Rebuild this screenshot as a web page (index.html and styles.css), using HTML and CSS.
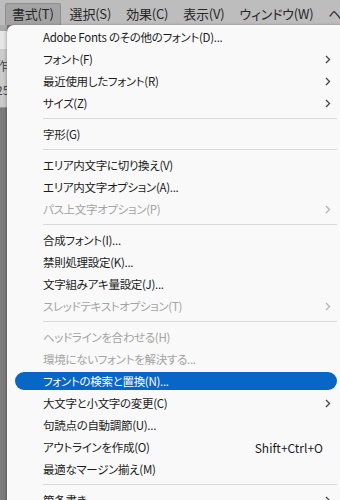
FILE: index.html
```html
<!DOCTYPE html>
<html lang="ja">
<head>
  <meta charset="UTF-8" />
  <title>書式メニュー</title>
  <link rel="stylesheet" href="styles.css">
</head>
<body>
  <div class="menubar">
    <span class="top-item active">書式(T)</span>
    <span class="top-item">選択(S)</span>
    <span class="top-item">効果(C)</span>
    <span class="top-item">表示(V)</span>
    <span class="top-item">ウィンドウ(W)</span>
    <span class="top-item">ヘ</span>
  </div>

  <div class="workspace">
    <div class="side">
      <div class="side-tab"></div>
      <div class="side-panel">
        <span class="side-text t1">作</span>
        <span class="side-text t2">25</span>
      </div>
    </div>

    <div class="menu">
      <div class="row"><span class="label">Adobe Fonts のその他のフォント(D)...</span></div>
      <div class="row sub"><span class="label">フォント(F)</span></div>
      <div class="row sub"><span class="label">最近使用したフォント(R)</span></div>
      <div class="row sub"><span class="label">サイズ(Z)</span></div>
      <div class="sep"></div>
      <div class="row"><span class="label">字形(G)</span></div>
      <div class="sep"></div>
      <div class="row"><span class="label">エリア内文字に切り換え(V)</span></div>
      <div class="row"><span class="label">エリア内文字オプション(A)...</span></div>
      <div class="row sub off"><span class="label">パス上文字オプション(P)</span></div>
      <div class="sep"></div>
      <div class="row"><span class="label">合成フォント(I)...</span></div>
      <div class="row"><span class="label">禁則処理設定(K)...</span></div>
      <div class="row"><span class="label">文字組みアキ量設定(J)...</span></div>
      <div class="row sub off"><span class="label">スレッドテキストオプション(T)</span></div>
      <div class="sep"></div>
      <div class="row off"><span class="label">ヘッドラインを合わせる(H)</span></div>
      <div class="row off"><span class="label">環境にないフォントを解決する...</span></div>
      <div class="row hover"><span class="label">フォントの検索と置換(N)...</span></div>
      <div class="row sub"><span class="label">大文字と小文字の変更(C)</span></div>
      <div class="row"><span class="label">句読点の自動調節(U)...</span></div>
      <div class="row"><span class="label">アウトラインを作成(O)</span><span class="shortcut">Shift+Ctrl+O</span></div>
      <div class="row"><span class="label">最適なマージン揃え(M)</span></div>
      <div class="sep"></div>
      <div class="row sub"><span class="label">箇条書き</span></div>
    </div>
  </div>

  <script>
    // chevrons for rows that open a submenu
    document.querySelectorAll(".row.sub").forEach(function (row) {
      row.insertAdjacentHTML("beforeend",
        '<svg class="chev" width="6" height="9" viewBox="0 0 6 9"><path d="M1 1 L4.5 4.5 L1 8" fill="none" stroke="currentColor" stroke-width="1.3"/></svg>');
    });
  </script>
</body>
</html>
```

FILE: styles.css
```css
body {
  margin: 0;
  width: 340px;
  height: 500px;
  overflow: hidden;
  background-color: #7b7b7b;
  font-family: "Noto Sans CJK JP", "Noto Sans", sans-serif;
  font-feature-settings: "palt";
}

.menubar {
  height: 25px;
  background-color: #bdbdbd;
  display: flex;
  align-items: flex-end;
  padding-left: 5px;
  white-space: nowrap;
  box-sizing: border-box;
}

.top-item {
  font-size: 13px;
  line-height: 19px;
  letter-spacing: -0.2px;
  color: #262626;
  padding: 0 7px 2px 7px;
  margin-right: 1px;
}

.top-item.active {
  background-color: #a3a3a3;
  border: 1px solid #8f8f8f;
  border-bottom: none;
  border-radius: 2px 2px 0 0;
  padding: 0 6px 2px 6px;
  margin-right: 2px;
}

.workspace {
  display: flex;
}

.side {
  width: 7px;
  flex-shrink: 0;
  overflow: hidden;
}

.side-tab {
  height: 6px;
  background-color: #a9a9a9;
}

.side-tab + .side-panel {
  border-top: 18px solid #e6e6e6;
}

.side-panel {
  height: 58px;
  background-color: #cbcbcb;
  border-bottom: 1px solid #9a9a9a;
  overflow: hidden;
  display: flex;
  flex-direction: column;
}

.side-text {
  font-size: 12px;
  color: #444;
  margin-left: -4px;
  line-height: 14px;
}

.t1 { margin-top: 10px; }
.t2 { margin-top: 10px; }

.menu {
  width: 338px;
  flex-shrink: 0;
  background-color: #f9f9f9;
  border-top-left-radius: 7px;
  box-shadow: -1px 0 3px rgba(0,0,0,0.25);
  padding-top: 1px;
  height: 480px;
}

.row {
  height: 22px;
  display: flex;
  align-items: center;
  padding-left: 36px;
  padding-right: 14px;
  font-size: 11.5px;
  letter-spacing: -0.3px;
  color: #1b1b1b;
  white-space: nowrap;
  box-sizing: border-box;
}

.label {
  flex: 1;
}

.off {
  color: #a3a3a3;
}

.hover {
  margin: 2px 8px 2px 8px;
  height: 18px;
  padding-left: 28px;
  background-color: #0866c6;
  border-radius: 9px;
  color: #ffffff;
}

.shortcut {
  font-size: 12px;
  letter-spacing: 0;
  margin-right: 8px;
}

.chev {
  color: #444;
}

.off .chev {
  color: #b5b5b5;
}

.sep {
  height: 1px;
  background-color: #d9d9d9;
  margin: 4px 8px 4px 36px;
}
```
